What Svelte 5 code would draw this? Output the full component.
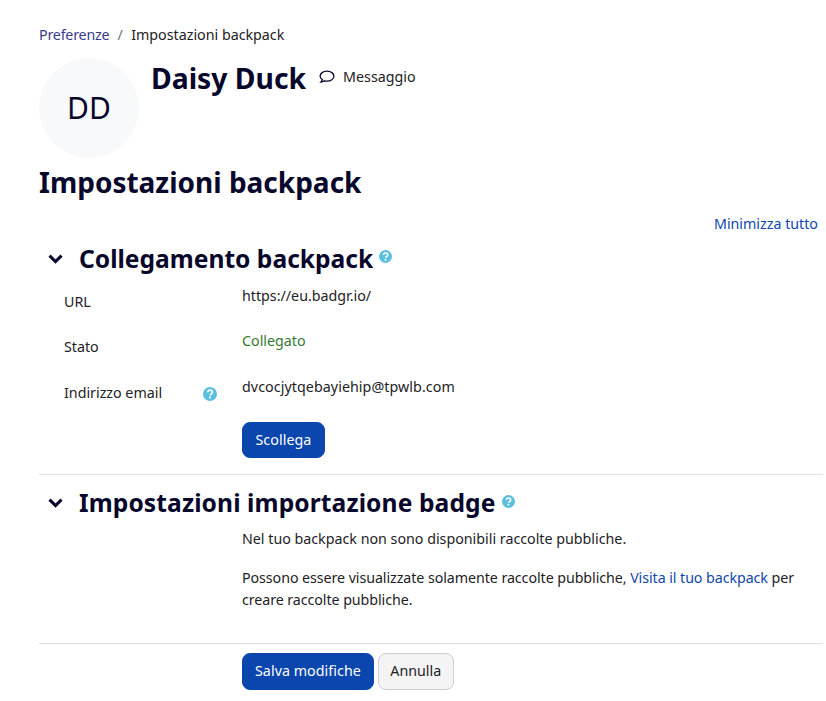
<script>
const rows = [
    { label: 'URL', value: 'https://eu.badgr.io/' },
    { label: 'Stato', value: 'Collegato', ok: true },
    { label: 'Indirizzo email', value: 'dvcocjytqebayiehip@tpwlb.com', help: true, wide: true }
];
</script>

{#snippet help(cls)}
<svg class={cls} viewBox="0 0 14 14" aria-hidden="true">
    <circle cx="7" cy="7" r="7" fill="#5bc0de" />
    <path d="M4.700 5.300c.1-1.400 1.100-2.100 2.400-2.100 1.300 0 2.300.8 2.300 2 0 1-.6 1.400-1.200 1.800-.5.3-.8.6-.8 1.100v.3" fill="none" stroke="#fff" stroke-width="1.700" />
    <rect x="6.100" y="9.600" width="1.800" height="1.800" fill="#fff" />
</svg>
{/snippet}

{#snippet chevron()}
<svg class="chevron" viewBox="0 0 15 10" aria-hidden="true">
    <path d="M1.500 1.600 7.500 7.600 13.500 1.600" fill="none" stroke="#07072c" stroke-width="3" />
</svg>
{/snippet}

<div class="page">
    <nav class="crumbs">
        <a href="#pref">Preferenze</a>
        <span class="sep">/</span>
        <span>Impostazioni backpack</span>
    </nav>

    <div class="user">
        <div class="avatar">DD</div>
        <h2>Daisy Duck</h2>
        <a class="msg" href="#msg">
            <svg viewBox="0 0 16 14" aria-hidden="true">
                <path d="M8 1.200c3.800 0 6.900 2.200 6.900 5s-3.100 5-6.900 5c-.9 0-1.700-.1-2.500-.4-.9.7-2.200 1.300-3.700 1.300.7-.7 1.300-1.600 1.500-2.500C1.900 8.700 1.100 7.500 1.100 6.200c0-2.800 3.100-5 6.900-5z" fill="none" stroke="#07072c" stroke-width="1.300" />
            </svg>
            <span>Messaggio</span>
        </a>
    </div>

    <h1>Impostazioni backpack</h1>

    <div class="collapse-all"><a href="#all">Minimizza tutto</a></div>

    <section class="first">
        <header>
            {@render chevron()}
            <h3>Collegamento backpack</h3>
            {@render help('help-small')}
        </header>
        <div class="rows">
            {#each rows as row}
            <div class="row">
                <div class="label">
                    <span>{row.label}</span>
                    {#if row.help}{@render help('help-big')}{/if}
                </div>
                <div class="value" class:ok={row.ok} class:wide={row.wide}>{row.value}</div>
            </div>
            {/each}
        </div>
        <div class="row-btn">
            <button class="primary">Scollega</button>
        </div>
    </section>

    <section class="second">
        <header>
            {@render chevron()}
            <h3>Impostazioni importazione badge</h3>
            {@render help('help-small')}
        </header>
        <div class="text">
            <p>Nel tuo backpack non sono disponibili raccolte pubbliche.</p>
            <p>Possono essere visualizzate solamente raccolte pubbliche, <a href="#bp">Visita il tuo backpack</a> per creare raccolte pubbliche.</p>
        </div>
    </section>

    <div class="actions">
        <button class="primary">Salva modifiche</button>
        <button class="secondary">Annulla</button>
    </div>
</div>

<style>
:global(body) {
    background: #fff;
    overflow: hidden;
}

.page {
    font-family: "Noto Sans", "Open Sans", sans-serif;
    font-size: 14.25px;
    line-height: 22.5px;
    color: #1d2125;
    padding: 24px 3px 0 39px;
    height: 677px;
    overflow: hidden;
}

a {
    color: #0f47ad;
    text-decoration: none;
}

.crumbs {
    display: flex;
    gap: 8px;
    height: 21px;
}

.crumbs a {
    color: #3a3a8c;
    letter-spacing: -0.2px;
}

.sep {
    color: #6a737b;
    margin-right: 0.5px;
}

.user {
    display: flex;
    align-items: flex-start;
    margin-top: 13px;
    height: 100px;
}

.avatar {
    width: 100px;
    height: 100px;
    border-radius: 50%;
    background: #f8f9fa;
    display: flex;
    align-items: center;
    justify-content: center;
    font-size: 30px;
    margin-right: 12px;
    color: #07072c;
}

h2 {
    margin: 0;
    font-size: 28.300px;
    line-height: 40px;
    font-weight: 700;
    color: #07072c;
}

.msg {
    display: flex;
    align-items: center;
    gap: 8px;
    margin: 8px 0 0 13px;
    color: #1d2125;
}

.msg svg {
    width: 16px;
    height: 14px;
}

h1 {
    margin: 5px 0 0;
    font-size: 28px;
    line-height: 38px;
    font-weight: 700;
    color: #07072c;
}

.collapse-all {
    text-align: right;
    margin-top: 12px;
    padding-right: 5px;
}

header {
    display: flex;
    align-items: center;
    height: 34px;
    padding-left: 9px;
}

.chevron {
    width: 15px;
    height: 10px;
    margin-right: 16px;
}

h3 {
    margin: 0;
    font-size: 24.600px;
    line-height: 34px;
    font-weight: 700;
    color: #07072c;
}

.second h3 {
    letter-spacing: 0.1px;
}

.help-small {
    width: 13px;
    height: 13px;
    margin: 0 0 4px 6px;
}

.first {
    margin-top: 6px;
    border-bottom: 1px solid #dee2e6;
    padding-bottom: 16px;
}

.rows {
    padding-top: 9px;
}

.row {
    display: flex;
    height: 45.500px;
}

.label {
    width: 203px;
    padding: 6.400px 25px 0;
    box-sizing: border-box;
    display: flex;
    justify-content: space-between;
    align-items: flex-start;
}

.help-big {
    width: 14px;
    height: 14px;
    margin-top: 5px;
}

.value {
    flex: 1;
}

.ok {
    color: #357a32;
}

.wide {
    letter-spacing: 0.07px;
}

.row-btn {
    padding-left: 203px;
    margin-top: 1px;
}

.row-btn button {
    height: 36px;
    padding: 0 12.500px;
}

button {
    font: inherit;
    height: 37px;
    padding: 0 12px;
    border-radius: 8px;
    cursor: pointer;
}

.primary {
    background: #0a46ae;
    border: 1px solid #0a46ae;
    color: #fff;
    letter-spacing: 0.05px;
}

.secondary {
    background: #f4f4f4;
    border: 1px solid #cfcfcf;
    color: #1d2125;
}

.second {
    margin-top: 11px;
    border-bottom: 1px solid #dee2e6;
}

.text {
    padding: 8px 20px 0 203px;
}

.text p {
    margin: 0 0 16px;
}

.text p:last-child {
    margin-bottom: 31px;
    letter-spacing: -0.07px;
}

.actions {
    display: flex;
    gap: 4px;
    padding-left: 203px;
    margin-top: 9px;
}

.actions .secondary {
    padding: 0 11.500px;
}
</style>
